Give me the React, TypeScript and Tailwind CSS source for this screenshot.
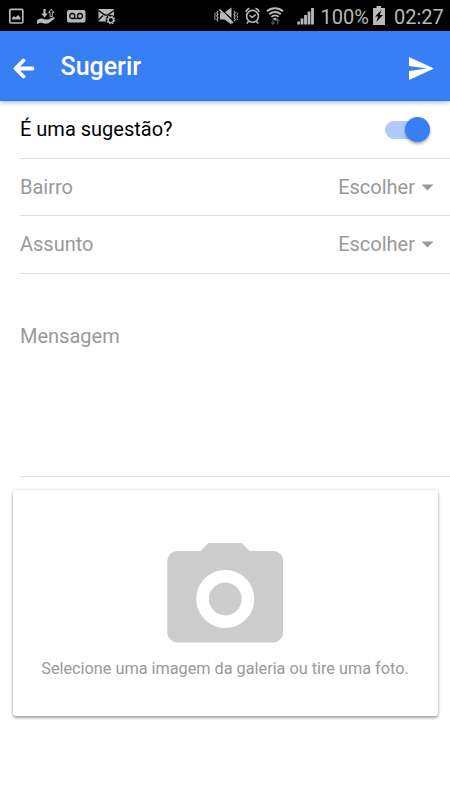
import { useState } from "react"

const StatusBar = () => {
    return (
        <div className="h-[31px] bg-black flex flex-row items-start text-[#b9b9b9]">
            <svg height="31" className="w-[318px] shrink-0" viewBox="0 0 318 31" fill="none" stroke="currentColor">
                {/* imagen */}
                <rect x="9.800" y="9.300" width="13" height="13.700" rx="1.200" strokeWidth="1.700" />
                <path d="M12 19.500v-1.500l2-2 1.500 1.500 2.500-2.500 2.500 3v1.500z" fill="currentColor" stroke="none" />

                {/* mano con flechas */}
                <path d="M37 20.500c2.500-2.300 5-2.500 7.500-1.200l3.500.2 5.200-2.200c1.400-.4 2 .8 1 1.600l-5.700 4.300c-2.500 1-4.500.2-6.500-.3-1.800-.2-3.200.3-5 1.300z" fill="currentColor" stroke="none" />
                <path d="M43.400 9h2.200v4.500h2.200l-3.300 4-3.300-4h2.200z" fill="currentColor" stroke="none" />
                <path d="M51.200 9.200l2.600 3.300h-1.500v4.200h-2.200v-4.200h-1.500z" strokeWidth="1" />

                {/* buzon de voz */}
                <rect x="67" y="10" width="18.500" height="12.500" rx="1.800" fill="currentColor" stroke="none" />
                <g stroke="#111" strokeWidth="1.300">
                    <circle cx="72.300" cy="16" r="2.500" />
                    <circle cx="80" cy="16" r="2.500" />
                    <path d="M72.300 18.500h7.700" />
                </g>

                {/* mensaje con engranaje */}
                <rect x="98.500" y="9" width="15.500" height="12.500" rx="1" fill="currentColor" stroke="none" />
                <path d="M98.500 10.500l4.500 3.200c2 1.800 4.500 1.800 6.500 0l4.500-3.200M98.500 20l4.500-4.500" stroke="#000" strokeWidth="1.300" />
                <circle cx="110.800" cy="20" r="5.200" fill="#000" stroke="none" />
                <circle cx="110.800" cy="20" r="2.700" strokeWidth="1.400" />
                <circle cx="110.800" cy="20" r="3.900" strokeWidth="1.200" strokeDasharray="1.530 1.530" />

                {/* silencio */}
                <path d="M220 12.500h4.500l7-5v17l-7-5h-4.500z" fill="currentColor" stroke="none" />
                <path d="M221 9l13 12.500" stroke="#000" strokeWidth="1.200" />
                <path d="M219.500 9.500l13.500 13.500" strokeWidth="1.700" />
                <path d="M218 11l-1.200 1.700 1.200 1.700-1.200 1.700 1.200 1.700-1.200 1.700 1.200 1.700M234 11l1.200 1.700-1.200 1.700 1.200 1.700-1.200 1.700 1.200 1.700-1.200 1.700" strokeWidth="1.100" />
                <path d="M215.300 12.500l-.7 1.500.7 1.500-.7 1.500.7 1.500-.7 1.500M236.900 12.500l.7 1.500-.7 1.500.7 1.500-.7 1.500.7 1.500" strokeWidth="0.900" />

                {/* alarma */}
                <circle cx="252.500" cy="16.300" r="5.900" strokeWidth="1.600" />
                <path d="M249.500 15.300l2.600 2.300 3.500-3" strokeWidth="1.500" />
                <path d="M246 12c.3-2 1.500-3.200 3.500-3.800M259 12c-.3-2-1.500-3.200-3.500-3.800M248.500 21.500l-1.700 2M256.500 21.500l1.700 2" strokeWidth="1.600" />

                {/* wifi */}
                <path d="M267 11.300c4.500-4 11.500-4 16 0M269.200 14.200c3.300-3 8.200-3 11.600 0M271.400 16.900c2-1.800 5.200-1.800 7.200 0" strokeWidth="1.900" />
                <path d="M273 18.700l2-1.100 2 1.100-2 2z" fill="currentColor" stroke="none" />
                <path d="M273 18.500v5.500M271.200 22.300l1.800 1.900 1.700-1.900M277.500 24.500v-5M275.800 21l1.700-1.800 1.800 1.800" stroke="#555" strokeWidth="1.200" />

                {/* señal */}
                <path d="M297.300 21.500h2.600v3h-2.600zM300.600 18.500h2.800v6h-2.800zM304.100 15h2.800v9.500h-2.800zM307.600 11.500h2.800v13h-2.800zM311.100 8h2.800v16.500h-2.800z" fill="currentColor" stroke="none" />
            </svg>
            <span className="ml-[2.500px] mt-[5px] w-[49px] text-xl leading-6">100%</span>
            <svg className="ml-[2.500px] mt-[6px] shrink-0" width="14" height="20" viewBox="0 0 14 20">
                <path d="M4.500 0h4.500v2H13v17H1V2h3.500z" fill="currentColor" />
                <path d="M9.500 4l-6.500 6.500h3.200L4.200 16 11 9H7.700z" fill="#000" />
            </svg>
            <span className="ml-[8px] mt-[5px] text-xl leading-6">02:27</span>
        </div>
    )
}

const SelectItem = ({ titulo }: { titulo: string }) => {
    return (
        <div className="ml-5 h-[57.500px] pr-4 flex justify-between items-center border-b-[1.500px] border-[#dedede] text-xl text-[#999]">
            <span>{titulo}</span>
            <button type="button" className="flex items-center">
                Escolher
                <svg className="ml-[6px] mt-px" width="13" height="7" viewBox="0 0 13 7">
                    <path d="M0.500 0.500h12L6.500 6.500z" fill="#999" />
                </svg>
            </button>
        </div>
    )
}

export default function App() {

    const [sugestao, setSugestao] = useState(true)

    return (
        <div className="w-[450px] h-[800px] bg-white flex flex-col overflow-hidden font-['Roboto',sans-serif]">
            <StatusBar />

            <header className="relative h-[70px] shrink-0 bg-[#387ef5] border-b border-[#1a7af8] shadow-[0_1px_5px_rgba(0,0,0,0.35)] flex items-center text-white">
                <svg className="ml-[13px] mt-[5px]" width="22" height="21" viewBox="0 0 22 21" fill="none" stroke="white" strokeWidth="3.800" strokeLinecap="round" strokeLinejoin="round">
                    <path d="M10.500 2.500L2.500 10.500l8 8M3 10.500h16.500" />
                </svg>
                <h1 className="ml-[25.500px] mt-[2px] text-[25px] leading-8 font-medium">Sugerir</h1>
                <button type="button" className="ml-auto mr-4 mt-[5px]">
                    <svg width="25" height="23" viewBox="0 0 25 23" fill="white">
                        <path d="M0 0l25 11.500L0 23v-9l18-2.500L0 9z" />
                    </svg>
                </button>
            </header>

            <div className="ml-5 h-[57.500px] shrink-0 pr-5 flex justify-between items-center border-b-[1.500px] border-[#dedede] text-xl text-black">
                <span>É uma sugestão?</span>
                <button
                    type="button"
                    className="mt-px w-[45px] h-[25px] flex items-center"
                    onClick={() => setSugestao(!sugestao)}
                >
                    <span className={sugestao
                        ? "w-[45px] h-[18px] rounded-full bg-[#afcbfb] flex items-center justify-end"
                        : "w-[45px] h-[18px] rounded-full bg-[#dedede] flex items-center justify-start"}
                    >
                        <span className="w-[25px] h-[25px] shrink-0 rounded-full bg-[#387ef5] shadow-[0_2px_3px_rgba(0,0,0,0.35)]"></span>
                    </span>
                </button>
            </div>

            <SelectItem titulo="Bairro" />
            <SelectItem titulo="Assunto" />

            <div className="ml-5 h-[203.500px] shrink-0 border-b-[1.500px] border-[#dedede]">
                <textarea
                    className="block mt-12 w-full h-36 resize-none outline-none text-xl leading-7 placeholder:text-[#999]"
                    placeholder="Mensagem"
                ></textarea>
            </div>

            <div className="mx-[12.500px] mt-[13px] h-[226px] shrink-0 rounded-[3px] bg-white shadow-[0_2px_3px_rgba(0,0,0,0.34),0_0_3px_rgba(0,0,0,0.16)] flex flex-col items-center">
                <svg className="mt-[53px]" width="116" height="100" viewBox="0.250 0 116 100">
                    <path d="M42 0h33l8 8h23.500a10 10 0 0 1 10 10v71.500a10 10 0 0 1-10 10h-96a10 10 0 0 1-10-10V18a10 10 0 0 1 10-10H34z" fill="#ccc" />
                    <circle cx="58.500" cy="56" r="22.700" fill="none" stroke="white" strokeWidth="12.600" />
                </svg>
                <p className="mt-[14px] text-[16.250px] leading-6 text-[#999] whitespace-nowrap">Selecione uma imagem da galeria ou tire uma foto.</p>
            </div>
        </div>
    )
}
